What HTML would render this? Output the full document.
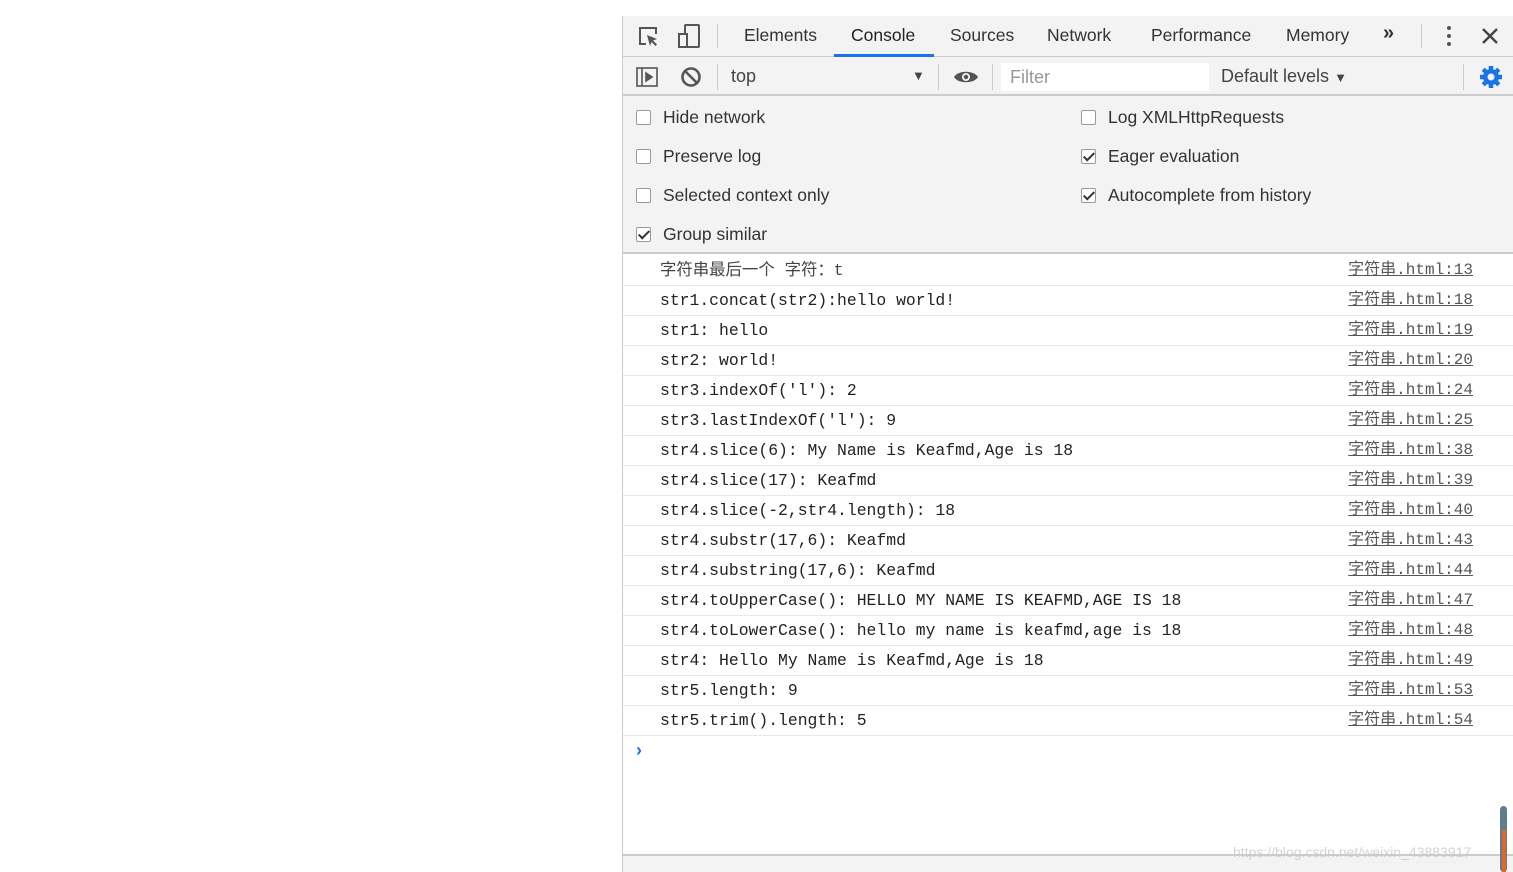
<!DOCTYPE html>
<html><head><meta charset="utf-8"><style>
*{margin:0;padding:0;box-sizing:border-box}
body{width:1513px;height:872px;background:#fff;position:relative;overflow:hidden;font-family:"Liberation Sans","Noto Sans CJK SC",sans-serif;color:#333}
.dt{position:absolute;left:622px;top:16px;width:891px;height:856px;border-left:1px solid #ccc;background:#fff}
.tabs{position:absolute;left:0;top:0;width:891px;height:41px;background:#f3f3f3;border-bottom:1px solid #ccc}
.tab{position:absolute;top:9px;font-size:17.5px;color:#333}
.tb{position:absolute;left:0;top:41px;width:891px;height:39px;background:#f3f3f3;border-bottom:2px solid #ccc}
.sep{position:absolute;width:1px;background:#ccc}
.set{position:absolute;left:0;top:80px;width:891px;height:158px;background:#f3f3f3;border-bottom:2px solid #ccc}
.cb{position:absolute;font-size:17.5px;color:#333}
.cb i{position:absolute;left:-27px;top:3px;width:15px;height:15px;border:1px solid #999;border-radius:2px;background:#fff}
.cb i.c::after{content:"";position:absolute;left:4px;top:0px;width:4px;height:9px;border:solid #333;border-width:0 2px 2px 0;transform:rotate(45deg)}
.log{position:absolute;left:0;top:240px;width:891px}
.row{height:30px;border-bottom:1px solid #e8e8e8;position:relative;font-family:"Liberation Mono","Noto Sans CJK SC",monospace;font-size:16.4px;color:#222;line-height:29px;padding-left:37px}
.row a{position:absolute;right:41px;top:0;color:#555;text-decoration:underline;font-size:16px}
</style></head><body>
<div class="dt">
<div class="tabs">
<svg style="position:absolute;left:14px;top:9px" width="24" height="24" viewBox="0 0 24 24" fill="none" stroke="#555" stroke-width="2"><path d="M9 19H3V3h16v6"/><path d="M10 10l10 4-4 1.5 4 4-1.5 1.5-4-4L13 21z" fill="#555" stroke="none"/></svg>
<svg style="position:absolute;left:54px;top:7px" width="24" height="26" viewBox="0 0 24 26" fill="none" stroke="#555" stroke-width="2"><rect x="8" y="2" width="14" height="22" rx="1"/><rect x="2" y="11" width="8" height="13" fill="#f3f3f3"/></svg>
<div class="sep" style="left:94px;top:8px;height:24px"></div>
<div class="tab" style="left:121px">Elements</div>
<div class="tab" style="left:228px;color:#222">Console</div>
<div style="position:absolute;left:211px;top:38px;width:100px;height:3px;background:#1a73e8"></div>
<div class="tab" style="left:327px">Sources</div>
<div class="tab" style="left:424px">Network</div>
<div class="tab" style="left:528px">Performance</div>
<div class="tab" style="left:663px">Memory</div>
<div class="tab" style="left:760px;font-weight:bold;top:6px;font-size:20px">»</div>
<div class="sep" style="left:798px;top:8px;height:24px"></div>
<div style="position:absolute;left:824px;top:10px"><div style="width:4px;height:4px;background:#555;border-radius:2px;margin-bottom:4px"></div><div style="width:4px;height:4px;background:#555;border-radius:2px;margin-bottom:4px"></div><div style="width:4px;height:4px;background:#555;border-radius:2px"></div></div>
<svg style="position:absolute;left:859px;top:12px" width="16" height="16" viewBox="0 0 16 16" stroke="#444" stroke-width="2.4"><path d="M1 1l14 14M15 1L1 15"/></svg>
</div>
<div class="tb">
<svg style="position:absolute;left:13px;top:10px" width="22" height="20" viewBox="0 0 22 20" fill="none" stroke="#555" stroke-width="1.6"><rect x="1" y="1" width="20" height="18"/><path d="M6 1v18"/><path d="M10 6l6 4-6 4z" fill="#555"/></svg>
<svg style="position:absolute;left:57px;top:9px" width="22" height="22" viewBox="0 0 22 22" fill="none" stroke="#555" stroke-width="2.6"><circle cx="11" cy="11" r="8.5"/><path d="M5 5l12 12"/></svg>
<div class="sep" style="left:94px;top:7px;height:26px"></div>
<div style="position:absolute;left:108px;top:9px;font-size:18px;color:#444">top</div>
<div style="position:absolute;left:289px;top:11px;font-size:13px;color:#444">▼</div>
<div class="sep" style="left:315px;top:7px;height:26px"></div>
<svg style="position:absolute;left:330px;top:11px" width="26" height="18" viewBox="0 0 26 18"><path d="M1 9C5 2 21 2 25 9C21 16 5 16 1 9z" fill="#555"/><circle cx="13" cy="9" r="4" fill="#f3f3f3"/><circle cx="13" cy="9" r="2.2" fill="#555"/></svg>
<div class="sep" style="left:369px;top:7px;height:26px"></div>
<div style="position:absolute;left:378px;top:6px;width:208px;height:28px;background:#fff"></div>
<div style="position:absolute;left:387px;top:10px;font-size:18px;color:#999">Filter</div>
<div style="position:absolute;left:598px;top:9px;font-size:18px;color:#444">Default levels <span style="font-size:13px">▼</span></div>
<div class="sep" style="left:840px;top:7px;height:26px"></div>
<svg style="position:absolute;left:856px;top:8px" width="24" height="24" viewBox="0 0 24 24"><g fill="#1a73e8"><circle cx="12" cy="12" r="8"/><g stroke="#1a73e8" stroke-width="4.5"><path d="M12 1v22M1 12h22M4.2 4.2l15.6 15.6M19.8 4.2L4.2 19.8"/></g></g><circle cx="12" cy="12" r="3.5" fill="#f3f3f3"/></svg>
</div>
<div class="set">
<div class="cb" style="left:40px;top:11px"><i></i>Hide network</div>
<div class="cb" style="left:40px;top:50px"><i></i>Preserve log</div>
<div class="cb" style="left:40px;top:89px"><i></i>Selected context only</div>
<div class="cb" style="left:40px;top:128px"><i class="c"></i>Group similar</div>
<div class="cb" style="left:485px;top:11px"><i></i>Log XMLHttpRequests</div>
<div class="cb" style="left:485px;top:50px"><i class="c"></i>Eager evaluation</div>
<div class="cb" style="left:485px;top:89px"><i class="c"></i>Autocomplete from history</div>
</div>
<div class="log">
<div class="row" style="color:#444">字符串最后一个 字符：t<a>字符串.html:13</a></div>
<div class="row">str1.concat(str2):hello world!<a>字符串.html:18</a></div>
<div class="row">str1: hello<a>字符串.html:19</a></div>
<div class="row">str2: world!<a>字符串.html:20</a></div>
<div class="row">str3.indexOf('l'): 2<a>字符串.html:24</a></div>
<div class="row">str3.lastIndexOf('l'): 9<a>字符串.html:25</a></div>
<div class="row">str4.slice(6): My Name is Keafmd,Age is 18<a>字符串.html:38</a></div>
<div class="row">str4.slice(17): Keafmd<a>字符串.html:39</a></div>
<div class="row">str4.slice(-2,str4.length): 18<a>字符串.html:40</a></div>
<div class="row">str4.substr(17,6): Keafmd<a>字符串.html:43</a></div>
<div class="row">str4.substring(17,6): Keafmd<a>字符串.html:44</a></div>
<div class="row">str4.toUpperCase(): HELLO MY NAME IS KEAFMD,AGE IS 18<a>字符串.html:47</a></div>
<div class="row">str4.toLowerCase(): hello my name is keafmd,age is 18<a>字符串.html:48</a></div>
<div class="row">str4: Hello My Name is Keafmd,Age is 18<a>字符串.html:49</a></div>
<div class="row">str5.length: 9<a>字符串.html:53</a></div>
<div class="row">str5.trim().length: 5<a>字符串.html:54</a></div>
<div style="position:relative;height:30px;padding-left:13px;color:#1a73e8;font-size:18px;font-weight:bold;line-height:28px">›</div>
</div>
<div style="position:absolute;left:0;top:838px;width:891px;height:2px;background:#ccc"></div>
<div style="position:absolute;left:0;top:840px;width:891px;height:16px;background:#f3f3f3"></div>
<div style="position:absolute;left:877px;top:790px;width:7px;height:66px;background:#607d8b;border-radius:4px"></div>
<div style="position:absolute;left:879px;top:814px;width:4px;height:42px;background:#e0662c"></div>
<div style="position:absolute;left:610px;top:828px;font-size:14px;color:rgba(200,200,200,0.8)">https://blog.csdn.net/weixin_43883917</div>
</div>
</body></html>
